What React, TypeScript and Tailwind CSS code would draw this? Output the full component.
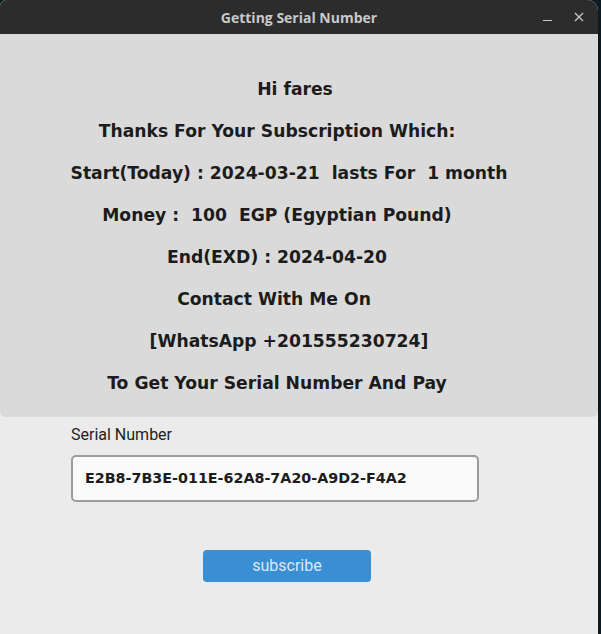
const LINES: { text: string; pad: string }[] = [
  { text: "Hi fares", pad: "pr-[8px]" },
  { text: "Thanks For Your Subscription Which:", pad: "pr-[44px]" },
  { text: "Start(Today) : 2024-03-21  lasts For  1 month", pad: "pr-[20px]" },
  { text: "Money :  100  EGP (Egyptian Pound)", pad: "pr-[44px]" },
  { text: "End(EXD) : 2024-04-20", pad: "pr-[44px]" },
  { text: "Contact With Me On", pad: "pr-[50px]" },
  { text: "[WhatsApp +201555230724]", pad: "pr-[20px]" },
  { text: "To Get Your Serial Number And Pay", pad: "pr-[44px]" },
];

export default function App() {
  return (
    <div className="flex h-[634px] w-[601px] bg-[#0c1a24]">
      <div className="flex w-[598px] flex-col overflow-hidden rounded-tl-[6px] rounded-tr-[10px] bg-[#ebebeb]">
        {/* title bar */}
        <div className="relative flex h-[34px] shrink-0 items-center justify-center bg-[#2c2c2c]">
          <span className="font-['Open_Sans',sans-serif] text-[14px] font-bold text-[#c9c9c9]">
            Getting Serial Number
          </span>
          <div className="absolute right-[14px] top-0 flex h-full items-center gap-[22px]">
            <span className="mt-[6px] h-[1px] w-[9px] bg-[#c8c8c8]" />
            <svg width="10" height="10" viewBox="0 0 10 10" className="text-[#c8c8c8]">
              <path d="M1 1L9 9M9 1L1 9" stroke="currentColor" strokeWidth="1.3" />
            </svg>
          </div>
        </div>

        {/* message panel */}
        <div className="flex h-[383px] shrink-0 flex-col gap-[21px] rounded-b-[6px] bg-[#dadada] pt-[45px]">
          {LINES.map((l) => (
            <div
              key={l.text}
              className={`whitespace-pre text-center font-['DejaVu_Sans',sans-serif] text-[17.2px] font-bold leading-[21px] text-[#1c1c1c] ${l.pad}`}
            >
              {l.text}
            </div>
          ))}
        </div>

        {/* serial form */}
        <div className="flex flex-col pl-[71px] pt-[7px]">
          <label className="font-['Roboto',sans-serif] text-[16px] leading-[21px] text-[#1e1e1e]">
            Serial Number
          </label>
          <div className="mt-[10px] flex h-[47px] w-[408px] items-center rounded-[5px] border-2 border-[#9c9c9c] bg-[#fafafa] pl-[12px]">
            <span className="font-['DejaVu_Sans',sans-serif] text-[14.3px] font-bold text-[#1c1c1c]">
              E2B8-7B3E-011E-62A8-7A20-A9D2-F4A2
            </span>
          </div>
          <button className="ml-[132px] mt-[48px] h-[32px] w-[168px] rounded-[4px] bg-[#3a8fd4] font-['Roboto',sans-serif] text-[16px] text-[#dbe8f5]">
            subscribe
          </button>
        </div>
      </div>
    </div>
  );
}
